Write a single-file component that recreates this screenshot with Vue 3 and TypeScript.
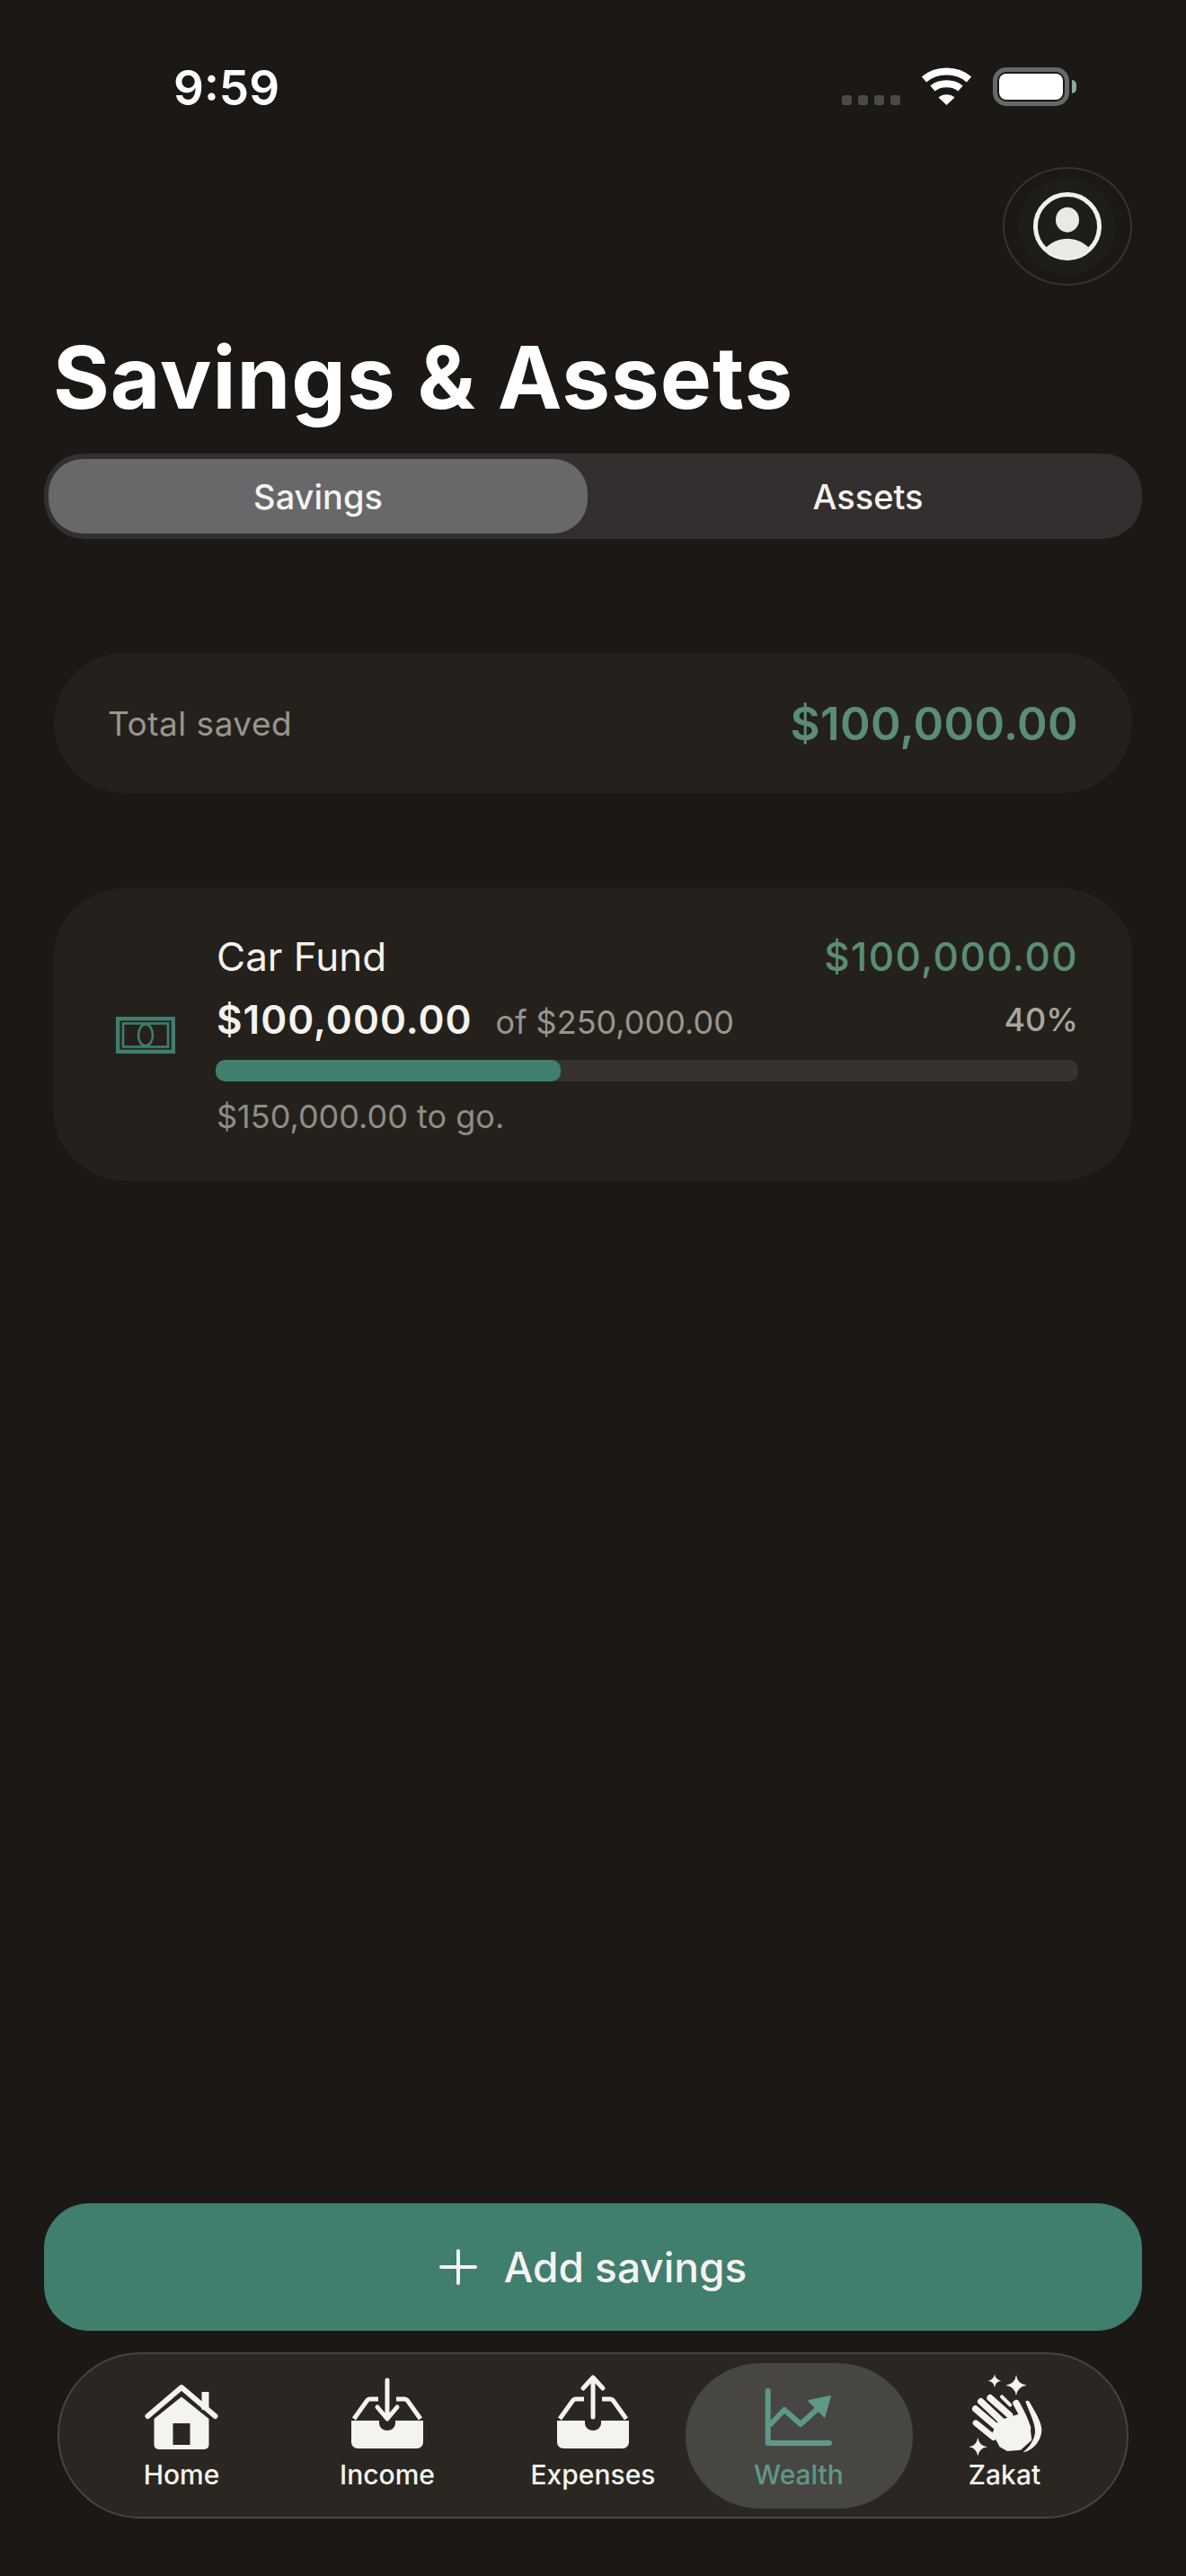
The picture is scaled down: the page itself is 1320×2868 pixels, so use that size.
<template>
  <div class="screen">
    <header class="status">
      <span class="time">9:59</span>
      <div class="status-icons">
        <div class="signal">
          <i v-for="n in 4" :key="n"></i>
        </div>
        <svg class="wifi" viewBox="0 0 57 42" fill="none" stroke="#fff" stroke-width="8">
          <path d="M3.500 13.500C17 1.500 40 1.500 53.500 13.500" />
          <path d="M13 23.500C21 16.500 36 16.500 44 23.500" />
          <path d="M19.500 33.500C24 29 33 29 37.500 33.500L28.500 42Z" fill="#fff" stroke="none" />
        </svg>
        <div class="battery">
          <div class="battery-body"><div class="battery-level"></div></div>
          <div class="battery-cap"></div>
        </div>
      </div>
    </header>

    <div class="avatar-row">
      <button class="avatar" type="button" aria-label="Profile">
        <span class="avatar-inner">
          <svg viewBox="0 0 76 76" width="76" height="76">
            <circle cx="38" cy="38" r="35.500" fill="none" stroke="#f2f0ec" stroke-width="5" />
            <ellipse cx="38" cy="30.700" rx="13" ry="14" fill="#ebe9e4" />
            <path d="M13 63C20 55 29 51.700 38 51.700C47 51.700 56 55 63 63A35 35 0 0 1 13 63Z" fill="#ebe9e4" />
          </svg>
        </span>
      </button>
    </div>

    <h1 class="title">Savings &amp; Assets</h1>

    <div class="segment" role="group" aria-label="Savings or assets">
      <button
        v-for="tab in tabs"
        :key="tab"
        type="button"
        class="segment-item"
        :class="{ active: tab === activeTab }"
        @click="activeTab = tab"
      >
        {{ tab }}
      </button>
    </div>

    <section class="total-card">
      <span class="total-label">Total saved</span>
      <span class="total-amount">$100,000.00</span>
    </section>

    <section class="goal-card">
      <svg class="goal-icon" viewBox="0 0 66 41" fill="none" stroke="#407e6e">
        <rect x="2.200" y="2.200" width="61.600" height="36.600" stroke-width="4.400" />
        <rect x="8" y="7.500" width="50" height="26" stroke-width="2.600" />
        <ellipse cx="33" cy="20.500" rx="8" ry="12" stroke-width="2.600" />
      </svg>
      <div class="goal-body">
        <div class="goal-row">
          <span class="goal-name">Car Fund</span>
          <span class="goal-saved">$100,000.00</span>
        </div>
        <div class="goal-row second">
          <span class="goal-amounts">
            <strong>$100,000.00</strong>
            <span class="goal-target">of $250,000.00</span>
          </span>
          <span class="goal-percent">{{ percent }}%</span>
        </div>
        <div class="progress">
          <div class="progress-fill" :style="{ width: percent + '%' }"></div>
        </div>
        <div class="goal-left">$150,000.00 to go.</div>
      </div>
    </section>

    <button class="add-button" type="button">
      <svg viewBox="0 0 42 40" width="42" height="40" fill="none" stroke="#f5f3ef" stroke-width="4" stroke-linecap="round">
        <path d="M21 2V38M2 20H40" />
      </svg>
      <span>Add savings</span>
    </button>

    <nav class="tabbar">
      <a v-for="item in navItems" :key="item" class="nav-item" :class="{ active: item === 'Wealth' }">
        <svg class="nav-icon" viewBox="0 0 100 92">
          <g v-if="item === 'Home'" transform="translate(9.500 12)">
            <path
              fill-rule="evenodd"
              d="M40.500 13.500L71 38V67a5 5 0 0 1-5 5H15a5 5 0 0 1-5-5V38ZM31 43V67H50V43Z"
            />
            <path d="M3 35L40.500 3L78 35" fill="none" stroke="currentColor" stroke-width="6" stroke-linecap="round" stroke-linejoin="round" />
            <rect x="63" y="8" width="8" height="20" />
          </g>
          <g v-else-if="item === 'Income' || item === 'Expenses'" transform="translate(10 5)">
            <path d="M30 23H21Q18.500 23 17 25.500L3 45M50 23H59Q61.500 23 63 25.500L77 45" fill="none" stroke="currentColor" stroke-width="5" />
            <path d="M0 47H31V50a9 8 0 0 0 18 0V47H80V71a7 7 0 0 1-7 7H7a7 7 0 0 1-7-7Z" />
            <path
              v-if="item === 'Income'"
              d="M40 2V44M29 32L40 45L51 32"
              fill="none"
              stroke="currentColor"
              stroke-width="5"
              stroke-linecap="round"
              stroke-linejoin="round"
            />
            <path
              v-else
              d="M40 0V43M29 11L40 -1L51 11"
              fill="none"
              stroke="currentColor"
              stroke-width="5"
              stroke-linecap="round"
              stroke-linejoin="round"
            />
          </g>
          <g v-else-if="item === 'Wealth'">
            <path d="M15.700 19V77H84" fill="none" stroke="currentColor" stroke-width="6" stroke-linecap="round" stroke-linejoin="round" />
            <path d="M18.500 56L34 40L52 56L73 37" fill="none" stroke="currentColor" stroke-width="6" stroke-linejoin="round" stroke-linecap="round" />
            <path d="M85 25L61.500 30L78.500 47.500Z" stroke="currentColor" stroke-width="2" stroke-linejoin="round" />
          </g>
          <g v-else transform="translate(3 2) scale(.3333)">
            <path d="M108 -5Q111 14 130 17Q111 20 108 39Q105 20 86 17Q105 14 108 -5Z" />
            <path d="M180 -3Q184 28 215 32Q184 36 180 67Q176 36 145 32Q176 28 180 -3Z" />
            <path d="M52 206Q56 234 84 238Q56 242 52 268Q48 242 22 238Q48 234 52 206Z" />
            <path d="M100 192L120 150L188 128L226 165L232 215L195 248L150 252L125 238Z" />
            <g fill="none" stroke="currentColor" stroke-linecap="round">
              <path stroke-width="22" d="M44 111L115 172" />
              <path stroke-width="22" d="M62 86L130 150" />
              <path stroke-width="22" d="M93 74L158 132" />
              <path stroke-width="12" d="M132 70L160 98" />
              <path stroke-width="20" d="M45 158L104 206" />
              <path stroke-width="22" d="M180 92C196 120 210 150 218 175" />
            </g>
            <path d="M211 86C217 80 224 84 227 92C250 132 274 170 262 200C254 228 232 250 203 256C226 236 240 216 243 190C246 164 226 126 211 86Z" />
          </g>
        </svg>
        <span class="nav-label">{{ item }}</span>
      </a>
    </nav>
  </div>
</template>

<script setup lang="ts">
import { ref } from 'vue'

const tabs = ['Savings', 'Assets']
const activeTab = ref('Savings')
const percent = 40
const navItems = ['Home', 'Income', 'Expenses', 'Wealth', 'Zakat']
</script>

<style scoped>
.screen {
  display: flex;
  flex-direction: column;
  height: 2868px;
  box-sizing: border-box;
  padding-bottom: 64px;
  background: #1b1815;
  color: #f5f3ef;
  font-family: Inter, "Liberation Sans", sans-serif;
  overflow: hidden;
}

.status {
  display: flex;
  justify-content: space-between;
  align-items: flex-start;
  padding: 75px 122px 0 193px;
}

.time {
  font-size: 53px;
  line-height: 46px;
  font-weight: 600;
  color: #fff;
}

.status-icons {
  display: flex;
  align-items: flex-end;
  height: 43px;
}

.signal {
  display: flex;
  gap: 7px;
  margin-right: 23px;
}

.signal i {
  width: 11px;
  height: 11px;
  margin-bottom: 1px;
  border-radius: 3px;
  background: #4a4a46;
}

.wifi {
  width: 57px;
  height: 42px;
  margin-bottom: 1px;
  margin-right: 23px;
}

.battery {
  display: flex;
  align-items: center;
  gap: 3px;
}

.battery-body {
  box-sizing: border-box;
  width: 85px;
  height: 43px;
  padding: 2px;
  border: 5px solid #686868;
  border-radius: 15px;
}

.battery-level {
  height: 100%;
  border-radius: 8px;
  background: #fff;
}

.battery-cap {
  width: 5px;
  height: 15px;
  border-radius: 0 8px 8px 0;
  background: #8aa89e;
}

.avatar-row {
  display: flex;
  justify-content: flex-end;
  padding-right: 60px;
  margin-top: 65px;
}

.avatar {
  display: flex;
  align-items: center;
  justify-content: center;
  box-sizing: border-box;
  width: 144px;
  height: 132px;
  padding: 0;
  border: 2.5px solid #363431;
  border-radius: 50%;
  background: transparent;
}

.avatar-inner {
  display: flex;
  align-items: center;
  justify-content: center;
  width: 108px;
  height: 108px;
  border-radius: 50%;
  background: #1f1d1a;
}

.title {
  margin: 52px 0 0 59px;
  font-size: 96px;
  line-height: 100px;
  font-weight: 700;
  letter-spacing: 1px;
  color: #fff;
}

.segment {
  display: flex;
  box-sizing: border-box;
  height: 95px;
  margin: 35px 49px 0;
  padding: 6px 5px;
  border-radius: 44px;
  background: #322f2e;
}

.segment-item {
  flex: 1;
  padding: 0;
  border: none;
  border-radius: 38px;
  background: transparent;
  color: #f5f3ef;
  font-family: inherit;
  font-size: 38px;
  font-weight: 500;
}

.segment-item:not(.active) {
  padding-left: 12px;
}

.segment-item.active {
  flex: 0 0 600px;
  background: #68676a;
}

.total-card {
  display: flex;
  justify-content: space-between;
  align-items: center;
  height: 156px;
  margin: 127px 60px 0;
  padding: 0 60px;
  border-radius: 78px;
  background: #24211c;
}

.total-label {
  font-size: 37px;
  letter-spacing: 0.5px;
  color: #98968f;
}

.total-amount {
  font-size: 51px;
  font-weight: 600;
  letter-spacing: 0.3px;
  color: #5b8d75;
}

.goal-card {
  display: flex;
  align-items: center;
  gap: 45px;
  margin: 105px 60px 0;
  padding: 52px 60px 50px 69px;
  border-radius: 84px / 74px;
  background: #24211c;
}

.goal-icon {
  flex: none;
  width: 66px;
  height: 41px;
}

.goal-body {
  flex: 1;
  min-width: 0;
}

.goal-row {
  display: flex;
  justify-content: space-between;
  align-items: center;
  height: 50px;
  padding-left: 1px;
}

.goal-row.second {
  margin-top: 20px;
}

.goal-name {
  font-size: 44px;
  font-weight: 400;
}

.goal-saved {
  font-size: 44px;
  font-weight: 500;
  letter-spacing: 1.4px;
  color: #5b8d75;
}

.goal-amounts strong {
  font-size: 44px;
  font-weight: 600;
  letter-spacing: 1px;
}

.goal-target {
  margin-left: 26px;
  font-size: 36px;
  color: #98968f;
}

.goal-percent {
  font-size: 36px;
  font-weight: 500;
  color: #a8a69f;
}

.progress {
  height: 24px;
  margin-top: 20px;
  border-radius: 10px;
  background: #353231;
  overflow: hidden;
}

.progress-fill {
  height: 100%;
  border-radius: 10px;
  background: #407e6e;
}

.goal-left {
  margin-top: 17px;
  padding-left: 1px;
  font-size: 36px;
  line-height: 44px;
  color: #8f8d87;
}

.add-button {
  display: flex;
  align-items: center;
  justify-content: center;
  gap: 30px;
  height: 142px;
  margin: auto 49px 0;
  border: none;
  border-radius: 50px;
  background: #407e6e;
  color: #f5f3ef;
  font-family: inherit;
  font-size: 46px;
  font-weight: 500;
}

.tabbar {
  display: flex;
  justify-content: center;
  align-items: center;
  box-sizing: border-box;
  height: 185px;
  margin: 24px 64px 0;
  border: 2.5px solid #474643;
  border-radius: 92px;
  background: #2a2722;
}

.nav-item {
  display: flex;
  flex-direction: column;
  align-items: center;
  flex: none;
  box-sizing: border-box;
  width: 229px;
  height: 162px;
  padding-top: 12px;
  color: #f5f3ef;
  fill: currentColor;
}

.nav-item.active {
  width: 253px;
  margin: 0 -12px;
  border-radius: 84px / 80px;
  background: #474642;
  color: #5f9888;
}

.nav-icon {
  flex: none;
  width: 100px;
  height: 92px;
}

.nav-label {
  margin-top: 2px;
  font-size: 30px;
  line-height: 36px;
  font-weight: 500;
}
</style>

<style>
html,
body {
  margin: 0;
  background: #1b1815;
}
</style>
